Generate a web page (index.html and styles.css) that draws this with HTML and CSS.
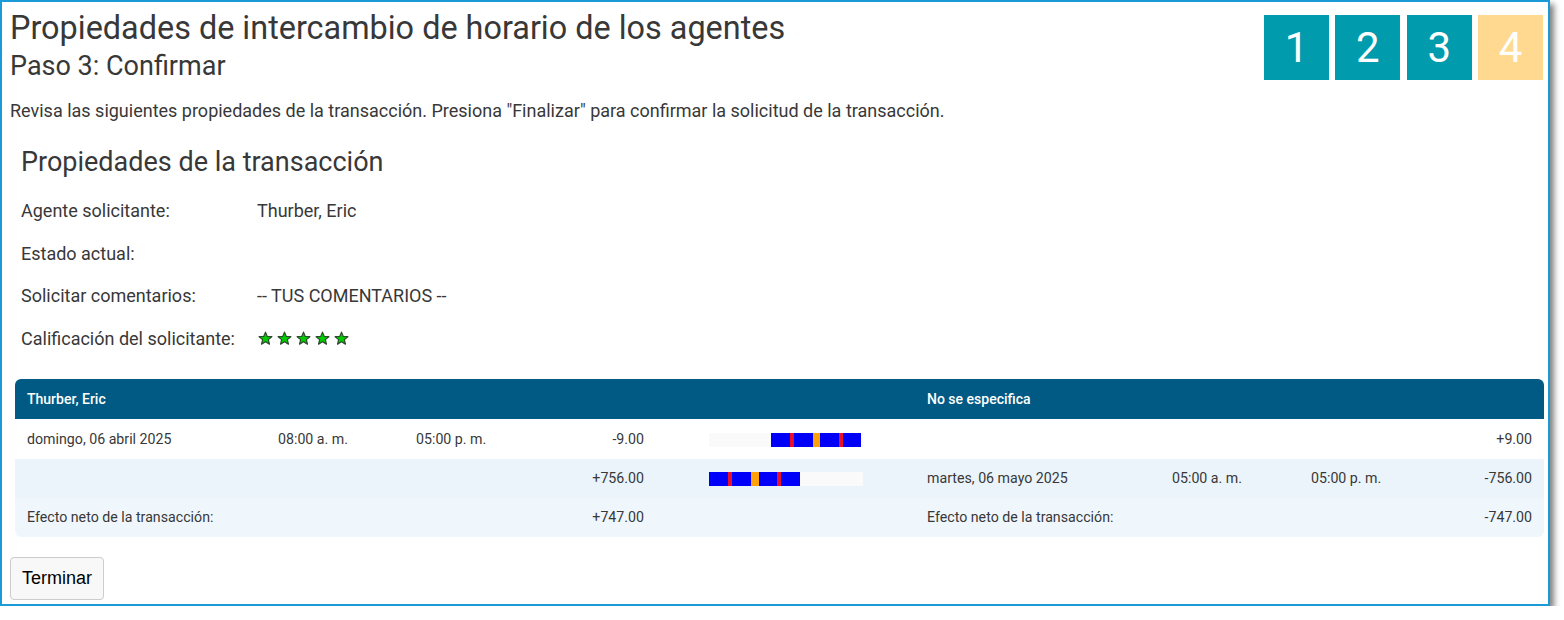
FILE: index.html
```html
<!DOCTYPE html>
<html lang="es">
<head>
<meta charset="utf-8">
<title>Propiedades de intercambio de horario de los agentes</title>
<link rel="stylesheet" href="styles.css">
</head>
<body>
<div class="frame">
  <div class="head">
    <div class="titles">
      <h1 class="title">Propiedades de intercambio de horario de los agentes</h1>
      <h2 class="subtitle">Paso 3: Confirmar</h2>
    </div>
    <div class="steps">
      <div class="step done">1</div>
      <div class="step done">2</div>
      <div class="step done">3</div>
      <div class="step current">4</div>
    </div>
  </div>
  <p class="intro">Revisa las siguientes propiedades de la transacción. Presiona "Finalizar" para confirmar la solicitud de la transacción.</p>

  <div class="section">
    <h3 class="section-title">Propiedades de la transacción</h3>
    <div class="props">
      <div class="prop-label">Agente solicitante:</div><div class="prop-value">Thurber, Eric</div>
      <div class="prop-label">Estado actual:</div><div class="prop-value"></div>
      <div class="prop-label">Solicitar comentarios:</div><div class="prop-value">-- TUS COMENTARIOS --</div>
      <div class="prop-label">Calificación del solicitante:</div>
      <div class="prop-value stars">
        <svg class="star" viewBox="0 0 20 20"><polygon points="10,1.5 12.4,7.2 18.5,7.6 13.8,11.5 15.3,17.5 10,14.2 4.7,17.5 6.2,11.5 1.5,7.6 7.6,7.2"/></svg>
        <svg class="star" viewBox="0 0 20 20"><polygon points="10,1.5 12.4,7.2 18.5,7.6 13.8,11.5 15.3,17.5 10,14.2 4.7,17.5 6.2,11.5 1.5,7.6 7.6,7.2"/></svg>
        <svg class="star" viewBox="0 0 20 20"><polygon points="10,1.5 12.4,7.2 18.5,7.6 13.8,11.5 15.3,17.5 10,14.2 4.7,17.5 6.2,11.5 1.5,7.6 7.6,7.2"/></svg>
        <svg class="star" viewBox="0 0 20 20"><polygon points="10,1.5 12.4,7.2 18.5,7.6 13.8,11.5 15.3,17.5 10,14.2 4.7,17.5 6.2,11.5 1.5,7.6 7.6,7.2"/></svg>
        <svg class="star" viewBox="0 0 20 20"><polygon points="10,1.5 12.4,7.2 18.5,7.6 13.8,11.5 15.3,17.5 10,14.2 4.7,17.5 6.2,11.5 1.5,7.6 7.6,7.2"/></svg>
      </div>
    </div>

    <div class="table-wrap">
      <table class="trade">
        <colgroup>
          <col class="c1"><col class="c2"><col class="c3"><col class="c4"><col class="c5">
          <col class="c6"><col class="c7"><col class="c8"><col class="c9">
        </colgroup>
        <thead>
          <tr>
            <th colspan="5">Thurber, Eric</th>
            <th colspan="4">No se especifica</th>
          </tr>
        </thead>
        <tbody>
          <tr class="r1">
            <td>domingo, 06 abril 2025</td>
            <td>08:00 a. m.</td>
            <td>05:00 p. m.</td>
            <td class="num">-9.00</td>
            <td class="barcell">
              <div class="track">
                <span class="seg gap" style="width:62px"></span>
                <span class="seg b" style="width:19px"></span>
                <span class="seg r" style="width:4px"></span>
                <span class="seg b" style="width:19px"></span>
                <span class="seg o" style="width:7px"></span>
                <span class="seg b" style="width:19px"></span>
                <span class="seg r" style="width:4px"></span>
                <span class="seg b" style="width:18px"></span>
              </div>
            </td>
            <td></td>
            <td></td>
            <td></td>
            <td class="num">+9.00</td>
          </tr>
          <tr class="r2">
            <td></td>
            <td></td>
            <td></td>
            <td class="num">+756.00</td>
            <td class="barcell">
              <div class="track">
                <span class="seg b" style="width:19px"></span>
                <span class="seg r" style="width:4px"></span>
                <span class="seg b" style="width:19px"></span>
                <span class="seg o" style="width:8px"></span>
                <span class="seg b" style="width:18px"></span>
                <span class="seg r" style="width:4px"></span>
                <span class="seg b" style="width:19px"></span>
              </div>
            </td>
            <td>martes, 06 mayo 2025</td>
            <td>05:00 a. m.</td>
            <td>05:00 p. m.</td>
            <td class="num">-756.00</td>
          </tr>
          <tr class="r3">
            <td colspan="3">Efecto neto de la transacción:</td>
            <td class="num">+747.00</td>
            <td></td>
            <td colspan="3">Efecto neto de la transacción:</td>
            <td class="num">-747.00</td>
          </tr>
        </tbody>
      </table>
    </div>
  </div>

  <button class="finish" type="button">Terminar</button>
</div>
</body>
</html>
```

FILE: styles.css
```css
html, body {
  margin: 0;
  padding: 0;
  background: #ffffff;
}

body {
  font-family: Roboto, "Liberation Sans", Arial, sans-serif;
  color: #383838;
}

.frame {
  box-sizing: border-box;
  width: 1550px;
  height: 606px;
  border: 2px solid #1a9bd7;
  padding: 0 5px 0 8px;
  background: #ffffff;
  box-shadow: 4px 4px 6px rgba(0, 0, 0, 0.5);
}

.head {
  display: flex;
  justify-content: space-between;
  align-items: flex-start;
}

.titles {
  padding-top: 7px;
}

.title {
  margin: 0;
  font-size: 32.4px;
  line-height: 38px;
  font-weight: 400;
}

.subtitle {
  margin: 3px 0 0;
  font-size: 27px;
  line-height: 32px;
  font-weight: 400;
}

.steps {
  display: flex;
  gap: 6.3px;
  margin-top: 13px;
}

.step {
  width: 65px;
  height: 65px;
  display: flex;
  align-items: center;
  justify-content: center;
  color: #ffffff;
  font-size: 42px;
  line-height: 1;
}

.step.done {
  background: #009cae;
}

.step.current {
  background: #ffd98f;
}

.intro {
  margin: 17px 0 0;
  font-size: 18px;
  line-height: 24px;
}

.section {
  padding-left: 5px;
}

.section-title {
  margin: 22px 0 0 6px;
  font-size: 27px;
  line-height: 34px;
  font-weight: 400;
}

.props {
  display: grid;
  grid-template-columns: 236px 1fr;
  grid-auto-rows: 42.7px;
  align-items: center;
  padding-left: 6px;
  margin-top: 10px;
  font-size: 18px;
}

.stars {
  display: flex;
  gap: 4px;
  align-items: center;
  padding-left: 1px;
}

.star {
  width: 15px;
  height: 15px;
}

.star polygon {
  fill: #00cc00;
  stroke: #2f4a2f;
  stroke-width: 1.6;
  stroke-linejoin: round;
}

.table-wrap {
  margin-top: 19px;
  width: 1529px;
  border-radius: 6px;
  overflow: hidden;
}

.trade {
  width: 1529px;
  table-layout: fixed;
  border-collapse: collapse;
  font-size: 14.2px;
}

.c1 { width: 251px; }
.c2 { width: 138px; }
.c3 { width: 136px; }
.c4 { width: 116px; }
.c5 { width: 259px; }
.c6 { width: 245px; }
.c7 { width: 139px; }
.c8 { width: 121px; }
.c9 { width: 124px; }

.trade th {
  background: #015a84;
  color: #ffffff;
  font-weight: 500;
  font-size: 14px;
  text-align: left;
  height: 40px;
  padding: 0 12px;
}

.trade td {
  padding: 0 12px;
  white-space: nowrap;
}

.trade .r1 td { height: 40px; background: #ffffff; }
.trade .r2 td { height: 39px; background: #ebf4fb; }
.trade .r3 td { height: 39px; background: #eff7fd; }

.trade td.num {
  text-align: right;
}

.trade td.barcell {
  padding: 0;
}

.track {
  display: flex;
  width: 154px;
  height: 14px;
  margin: 2px auto 0;
  background: #fafafa;
}

.seg { display: block; height: 100%; }
.seg.gap { background: transparent; }
.seg.b { background: #0000fa; }
.seg.r { background: #e8102c; }
.seg.o { background: #ffa20a; }

.finish {
  margin-top: 20px;
  height: 43px;
  padding: 0 11px;
  border: 1px solid #cccccc;
  border-radius: 4px;
  background: #f8f8f8;
  color: #000000;
  font-family: "Liberation Sans", Arial, sans-serif;
  font-size: 18px;
}
```
